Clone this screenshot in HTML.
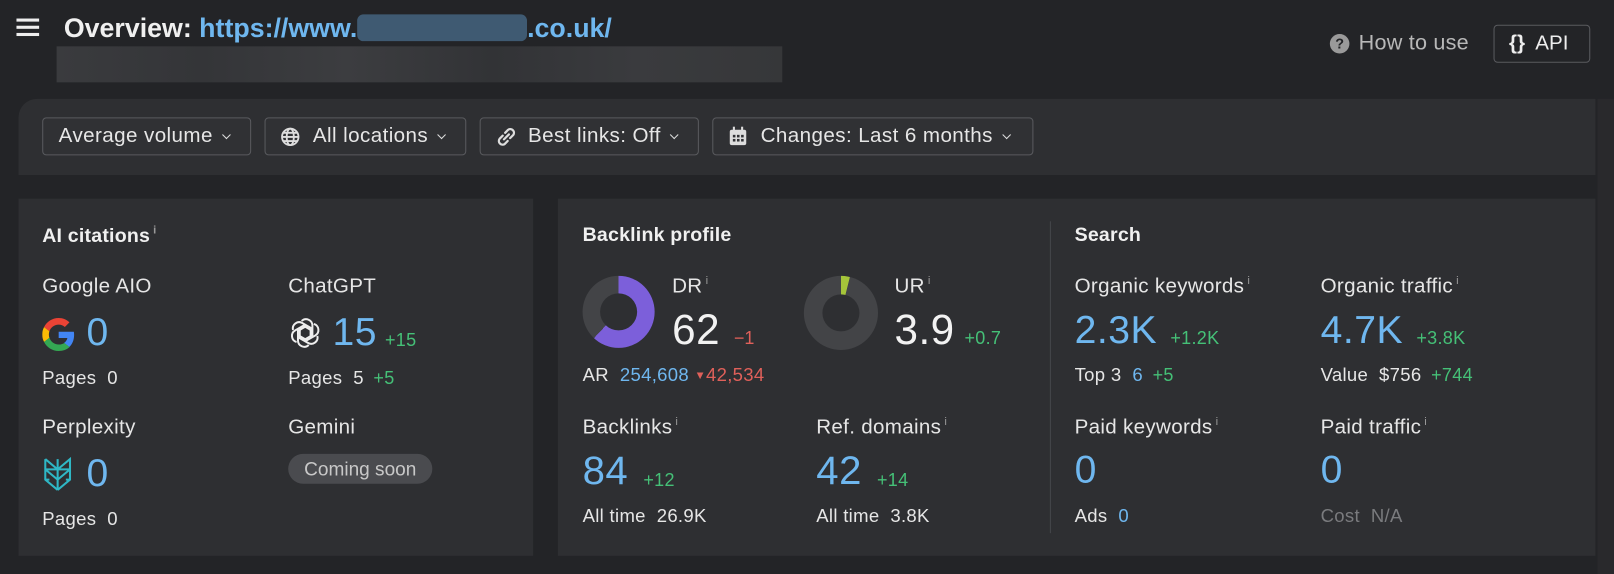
<!DOCTYPE html>
<html><head><meta charset="utf-8"><style>
*{margin:0;padding:0;box-sizing:border-box}
html,body{width:1614px;height:574px;overflow:hidden;background:#232427}
body{font-family:"Liberation Sans",Arial,sans-serif;color:#e6e6e6}
#w{position:absolute;left:0;top:0;width:1568px;height:558px;transform:scale(1.0293);transform-origin:0 0}
.a{position:absolute;white-space:nowrap}
.pan{position:absolute;background:#2e2f32}
.btn{position:absolute;top:114px;height:37px;border:1px solid #595a5e;border-radius:4px;background:#303134;font-size:20px;letter-spacing:0.4px;line-height:35px;padding-left:15px;color:#e6e6e6}
.chev{display:inline-block;width:6px;height:6px;border-right:1.5px solid #ddd;border-bottom:1.5px solid #ddd;transform:rotate(45deg);margin-left:10px;position:relative;top:-4px}
.h{font-size:19px;font-weight:bold;color:#f0f0f0;letter-spacing:0.2px}
.l{font-size:20px;letter-spacing:0.3px;color:#e6e6e6}
.n{font-size:38px;color:#6fb7ef;letter-spacing:0.5px}
.w{color:#f2f2f2}
.g{color:#45c077;font-size:17.5px;letter-spacing:0.3px}
.s{font-size:18px;letter-spacing:0.3px;color:#e6e6e6}
.b{color:#6fb7ef}
sup{font-size:11px;color:#999;vertical-align:8px;margin-left:3px}
</style></head><body><div id="w">
<div class="a" style="left:16px;top:18px;width:22px;height:3px;background:#eee;box-shadow:0 7px 0 #eee,0 14px 0 #eee"></div>
<div class="a" style="left:62px;top:12px;font-size:26px;font-weight:bold;color:#f0f0f0;letter-spacing:0px">Overview: <span style="color:#6fb7ef">https://www.</span><span style="display:inline-block;width:165px;height:26px;background:#3f5a72;vertical-align:-4px;border-radius:6px"></span><span style="color:#6fb7ef">.co.uk/</span></div>
<div class="a" style="left:55px;top:45px;width:705px;height:35px;background:linear-gradient(90deg,#3a3b3e,#343538 20%,#3c3d40 40%,#323336 60%,#3a3b3e 80%,#363739)"></div>
<div class="a" style="left:1292px;top:33px;width:19px;height:19px;border-radius:50%;background:#9a9a9a;color:#232427;font-size:14px;font-weight:bold;text-align:center;line-height:19px">?</div>
<div class="a" style="left:1320px;top:30px;font-size:21px;letter-spacing:0.2px;color:#b8b8b8">How to use</div>
<div class="a" style="left:1451px;top:24px;width:94px;height:37px;border:1px solid #5a5b5f;border-radius:4px;font-size:20px;line-height:35px;padding-left:14px;color:#eee"><b>{}</b>&nbsp; API</div>
<div class="pan" style="left:18px;top:96px;width:1532px;height:74px;border-top-left-radius:18px;background:#2e2f32"></div>
<div class="btn" style="left:41px;width:203px">Average volume<span class="chev"></span></div>
<div class="btn" style="left:257px;width:196px;padding-left:46px"><svg class="a" style="left:14px;top:8px" width="20" height="20" viewBox="0 0 20 20" fill="none" stroke="#ddd" stroke-width="1.8"><circle cx="10" cy="10" r="8"/><ellipse cx="10" cy="10" rx="3.5" ry="8"/><path d="M2 10h16M3.5 6h13M3.5 14h13"/></svg>All locations<span class="chev"></span></div>
<div class="btn" style="left:466px;width:213px;padding-left:46px"><svg class="a" style="left:13px;top:6px" width="24" height="24" viewBox="0 0 20 20" fill="none" stroke="#ddd" stroke-width="1.8" stroke-linecap="round"><path d="M8 12l4-4M7 9l-2.5 2.5a3 3 0 004.2 4.2L11 13.3M13 11l2.5-2.5a3 3 0 00-4.2-4.2L9 6.7"/></svg>Best links: Off<span class="chev"></span></div>
<div class="btn" style="left:692px;width:312px;padding-left:46px"><svg class="a" style="left:15px;top:8px" width="18" height="19" viewBox="0 0 18 19"><rect x="1" y="3" width="16" height="15" rx="2" fill="#ddd"/><rect x="4" y="0" width="2" height="4" fill="#ddd"/><rect x="12" y="0" width="2" height="4" fill="#ddd"/><g fill="#303134"><rect x="4" y="8" width="2.5" height="2.5"/><rect x="8" y="8" width="2.5" height="2.5"/><rect x="12" y="8" width="2.5" height="2.5"/><rect x="4" y="12" width="2.5" height="2.5"/><rect x="8" y="12" width="2.5" height="2.5"/><rect x="12" y="12" width="2.5" height="2.5"/></g></svg>Changes: Last 6 months<span class="chev"></span></div>
<div class="a" style="left:1552px;top:96px;width:16px;height:462px;background:#29292c"></div>

<div class="pan" style="left:18px;top:193px;width:500px;height:347px"></div>
<div class="pan" style="left:542px;top:193px;width:1008px;height:347px"></div>
<div class="a" style="left:1020px;top:215px;width:1px;height:303px;background:#45464a"></div>

<div class="a h" style="left:41px;top:218px">AI citations<sup>i</sup></div>
<div class="a l" style="left:41px;top:267px">Google AIO</div>
<svg class="a" style="left:41px;top:309px" width="32" height="32" viewBox="0 0 48 48"><path fill="#EA4335" d="M24 9.5c3.5 0 6.6 1.2 9 3.5l6.7-6.7C35.6 2.4 30.2 0 24 0 14.6 0 6.6 5.4 2.7 13.2l7.8 6C12.4 13.7 17.7 9.5 24 9.5z"/><path fill="#4285F4" d="M46.5 24.5c0-1.6-.1-3.1-.4-4.5H24v9h12.7c-.6 3-2.3 5.5-4.8 7.2l7.6 5.9c4.4-4.1 7-10.1 7-17.6z"/><path fill="#FBBC05" d="M10.5 28.8c-.5-1.5-.8-3.1-.8-4.8s.3-3.3.8-4.8l-7.8-6C1 16.5 0 20.1 0 24s1 7.5 2.7 10.8l7.8-6z"/><path fill="#34A853" d="M24 48c6.5 0 11.9-2.1 15.9-5.8l-7.6-5.9c-2.1 1.4-4.9 2.3-8.3 2.3-6.3 0-11.6-4.2-13.5-9.9l-7.8 6C6.6 42.6 14.6 48 24 48z"/></svg>
<div class="a n" style="left:84px;top:302px">0</div>
<div class="a s" style="left:41px;top:357px">Pages&nbsp; 0</div>
<div class="a l" style="left:41px;top:404px">Perplexity</div>
<svg class="a" style="left:41px;top:443px" width="30" height="34" viewBox="0 0 30 34" fill="none" stroke="#2fb7c5" stroke-width="2"><path d="M3 3l12 10 12-10v10M3 3v10M3 13h24M15 3v30M3 13l12 10 12-10M3 13v10l12 10M27 13v10L15 33M3 23h4M27 23h-4"/></svg>
<div class="a n" style="left:84px;top:439px">0</div>
<div class="a s" style="left:41px;top:494px">Pages&nbsp; 0</div>

<div class="a l" style="left:280px;top:267px">ChatGPT</div>
<svg class="a" style="left:280px;top:307px" width="33" height="33" viewBox="0 0 24 24" fill="none" stroke="#eee" stroke-width="1.4"><g transform="translate(12 12)"><path id="p" d="M-2.5-8.5a4.5 4.5 0 017.6 3.3V1.5L0 4.4"/><use href="#p" transform="rotate(60)"/><use href="#p" transform="rotate(120)"/><use href="#p" transform="rotate(180)"/><use href="#p" transform="rotate(240)"/><use href="#p" transform="rotate(300)"/></g></svg>
<div class="a n" style="left:323px;top:302px">15</div>
<div class="a g" style="left:374px;top:320px">+15</div>
<div class="a s" style="left:280px;top:357px">Pages&nbsp; 5 <span class="g" style="margin-left:4px">+5</span></div>
<div class="a l" style="left:280px;top:404px">Gemini</div>
<div class="a" style="left:280px;top:441px;width:140px;height:29px;border-radius:15px;background:#4a4b4f;color:#c8c8c8;font-size:18.5px;line-height:29px;text-align:center">Coming soon</div>

<div class="a h" style="left:566px;top:218px">Backlink profile</div>
<div class="a" style="left:566px;top:268px;width:70px;height:70px;border-radius:50%;background:conic-gradient(#7c5fda 0 62%,#434447 62% 100%)"></div>
<div class="a" style="left:583px;top:285px;width:36px;height:36px;border-radius:50%;background:#2e2f32"></div>
<div class="a l" style="left:653px;top:267px">DR<sup>i</sup></div>
<div class="a n w" style="left:653px;top:297px;font-size:41px">62</div>
<div class="a" style="left:713px;top:318px;font-size:17.5px;color:#e0605a">−1</div>
<div class="a s" style="left:566px;top:354px">AR&nbsp; <span class="b">254,608</span> <span style="color:#e0605a"><span style="font-size:11px;vertical-align:2px">▼</span>42,534</span></div>
<div class="a" style="left:781px;top:268px;width:72px;height:72px;border-radius:50%;background:conic-gradient(#a5c53a 0 3.9%,#434447 3.9% 100%)"></div>
<div class="a" style="left:799px;top:286px;width:36px;height:36px;border-radius:50%;background:#2e2f32"></div>
<div class="a l" style="left:869px;top:267px">UR<sup>i</sup></div>
<div class="a n w" style="left:869px;top:297px;font-size:41px">3.9</div>
<div class="a g" style="left:937px;top:318px">+0.7</div>
<div class="a l" style="left:566px;top:404px">Backlinks<sup>i</sup></div>
<div class="a n" style="left:566px;top:436px;font-size:39px">84</div>
<div class="a g" style="left:625px;top:456px">+12</div>
<div class="a s" style="left:566px;top:491px">All time&nbsp; 26.9K</div>
<div class="a l" style="left:793px;top:404px">Ref. domains<sup>i</sup></div>
<div class="a n" style="left:793px;top:436px;font-size:39px">42</div>
<div class="a g" style="left:852px;top:456px">+14</div>
<div class="a s" style="left:793px;top:491px">All time&nbsp; 3.8K</div>

<div class="a h" style="left:1044px;top:218px">Search</div>
<div class="a l" style="left:1044px;top:267px">Organic keywords<sup>i</sup></div>
<div class="a n" style="left:1044px;top:300px">2.3K</div>
<div class="a g" style="left:1137px;top:318px">+1.2K</div>
<div class="a s" style="left:1044px;top:354px">Top 3&nbsp; <span class="b">6</span> <span class="g" style="margin-left:4px">+5</span></div>
<div class="a l" style="left:1283px;top:267px">Organic traffic<sup>i</sup></div>
<div class="a n" style="left:1283px;top:300px">4.7K</div>
<div class="a g" style="left:1376px;top:318px">+3.8K</div>
<div class="a s" style="left:1283px;top:354px">Value&nbsp; $756 <span class="g" style="margin-left:4px">+744</span></div>
<div class="a l" style="left:1044px;top:404px">Paid keywords<sup>i</sup></div>
<div class="a n" style="left:1044px;top:436px">0</div>
<div class="a s" style="left:1044px;top:491px">Ads&nbsp; <span class="b">0</span></div>
<div class="a l" style="left:1283px;top:404px">Paid traffic<sup>i</sup></div>
<div class="a n" style="left:1283px;top:436px">0</div>
<div class="a s" style="left:1283px;top:491px;color:#7a7b7e">Cost&nbsp; N/A</div>
</div></body></html>
